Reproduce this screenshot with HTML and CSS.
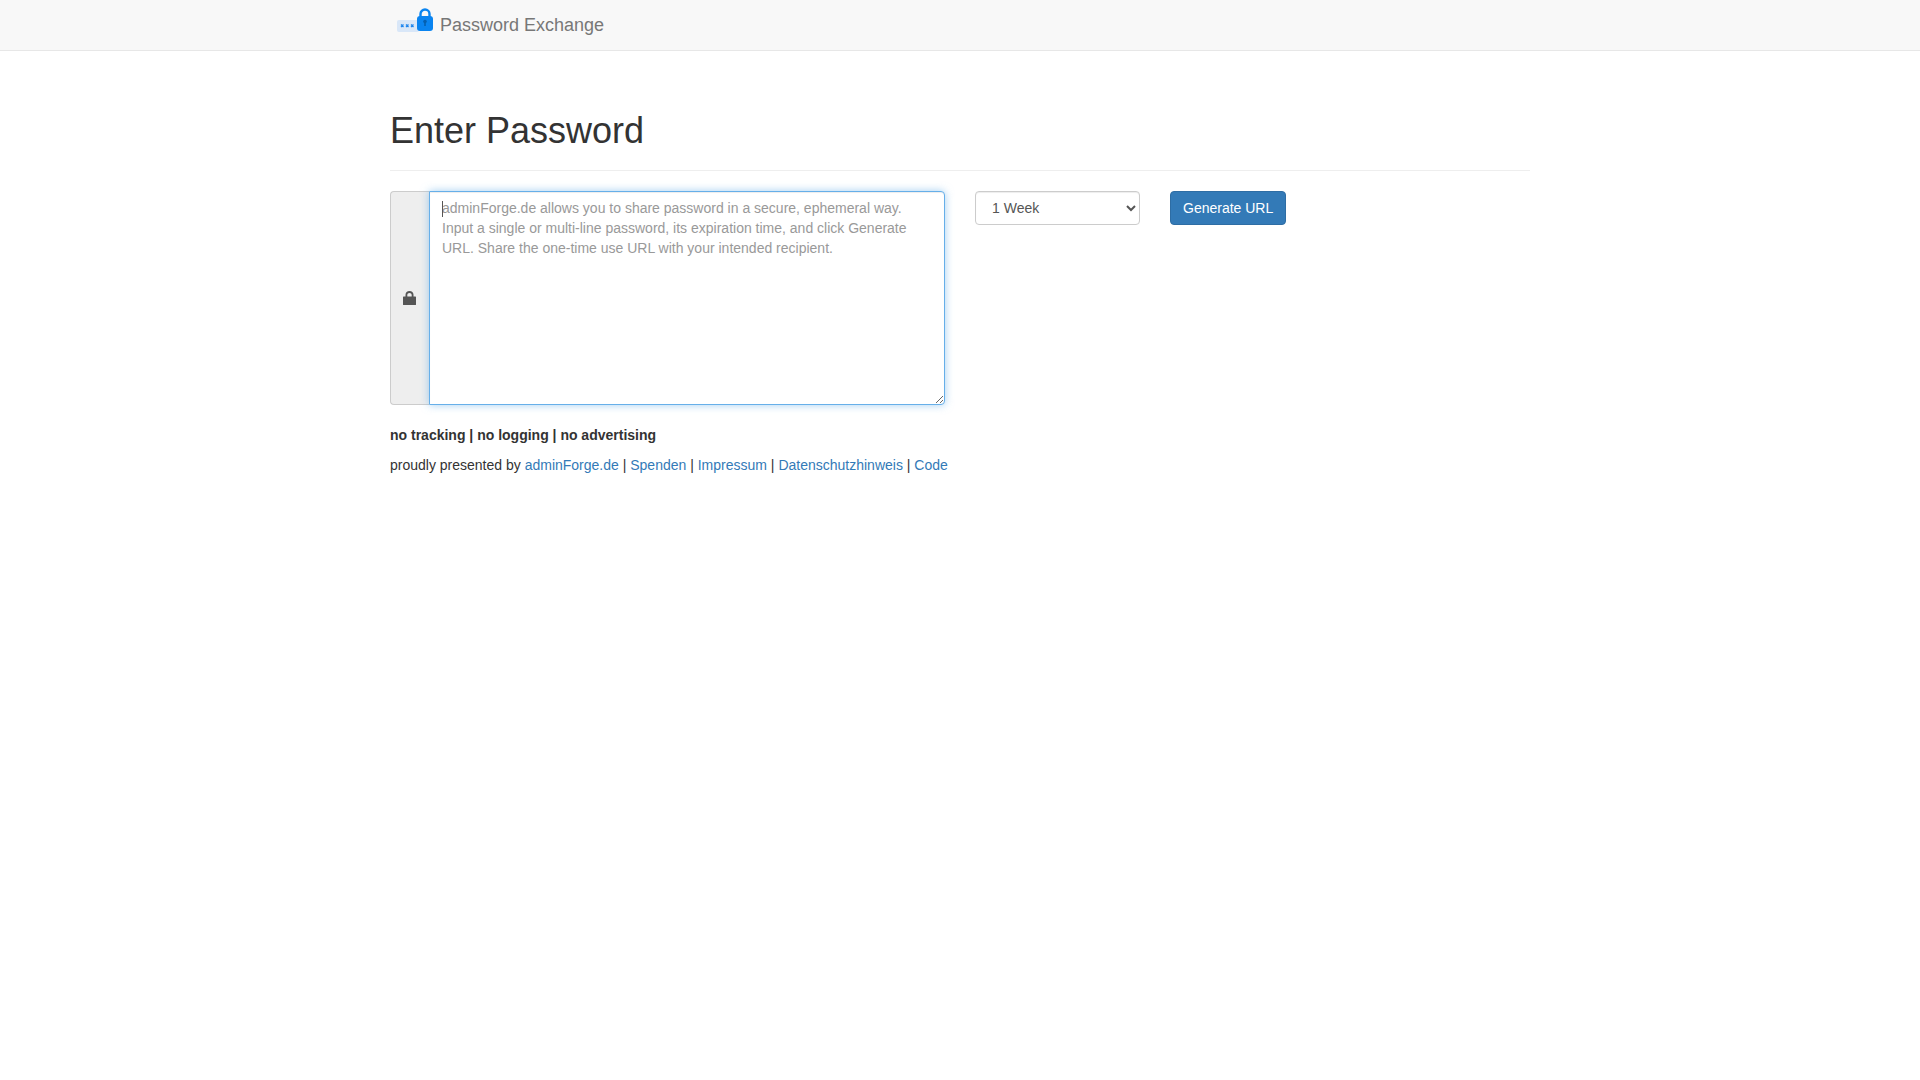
FILE: index.html
```html
<!DOCTYPE html>
<html lang="en">
<head>
<meta charset="utf-8">
<title>Password Exchange</title>
<link rel="stylesheet" href="styles.css">
</head>
<body>
<nav class="navbar">
  <div class="container">
    <a class="brand" href="#">
      <svg class="logo" width="36" height="24" viewBox="0 0 36 24" aria-hidden="true">
        <rect x="0" y="12" width="22" height="12" rx="2" fill="#d9e7f8"/>
        <path d="M4 16.500l2.500 2.500M6.500 16.500L4 19M9 16.500l2.500 2.500M11.500 16.500L9 19M14 16.500l2.500 2.500M16.500 16.500L14 19" fill="none" stroke="#1f86ee" stroke-width="1.300"/>
        <path d="M23.500 9V6a4.500 4.500 0 0 1 9 0v3" fill="none" stroke="#0a84f0" stroke-width="2.400"/>
        <rect x="20" y="8" width="16" height="15" rx="3" fill="#0a84f0"/>
        <circle cx="28" cy="13.500" r="1.800" fill="#0560b0"/>
        <rect x="27.200" y="14" width="1.600" height="4" fill="#0560b0"/>
      </svg>
      <span>Password Exchange</span>
    </a>
  </div>
</nav>
<main class="container">
  <div class="page-header"><h1>Enter Password</h1></div>
  <form class="pw-form">
    <div class="input-group">
      <span class="addon">
        <svg class="lock" width="13" height="14" viewBox="0 0 13 14" aria-hidden="true"><path d="M2.500 5.500V3.800C2.500 1.400 4.200 0 6.500 0s4 1.400 4 3.800v1.700H8.700V3.900c0-1.200-.9-2-2.200-2s-2.200.8-2.200 2v1.600zM.6 5.500h11.800a.6.600 0 0 1 .6.600v7.300a.6.600 0 0 1-.6.600H.6a.6.600 0 0 1-.6-.6V6.100a.6.600 0 0 1 .6-.6z" fill="#555"/></svg>
      </span>
      <textarea class="pw-input" autofocus placeholder="adminForge.de allows you to share password in a secure, ephemeral way. Input a single or multi-line password, its expiration time, and click Generate URL. Share the one-time use URL with your intended recipient."></textarea>
      <span class="caret"></span>
    </div>
    <select class="ttl">
      <option>1 Week</option>
      <option>1 Day</option>
      <option>1 Hour</option>
    </select>
    <button class="btn" type="button">Generate URL</button>
  </form>
  <p class="tagline">no tracking | no logging | no advertising</p>
  <p class="links">proudly presented by <a href="#">adminForge.de</a> | <a href="#">Spenden</a> | <a href="#">Impressum</a> | <a href="#">Datenschutzhinweis</a> | <a href="#">Code</a></p>
</main>
</body>
</html>
```
FILE: styles.css
```css
* { box-sizing: border-box; }
html, body { margin: 0; padding: 0; }
body {
  font-family: "Liberation Sans", Arial, sans-serif;
  font-size: 14px;
  line-height: 20px;
  color: #333;
  background: #fff;
}
.container { width: 1170px; margin: 0 auto; padding: 0 15px; }
.navbar {
  height: 51px;
  background: #f8f8f8;
  border-bottom: 1px solid #e7e7e7;
}
.brand {
  display: flex;
  align-items: center;
  height: 50px;
  padding-left: 7px;
  gap: 7px;
  font-size: 18px;
  color: #777;
  text-decoration: none;
}
.logo { display: block; align-self: flex-start; margin-top: 8px; flex: none; }
.page-header {
  margin: 60px 0 20px;
  padding-bottom: 9px;
  border-bottom: 1px solid #eee;
}
h1 {
  margin: 0 0 10px;
  font-size: 36px;
  font-weight: 500;
  line-height: 39.6px;
  color: #333;
}
.pw-form { display: flex; align-items: flex-start; gap: 30px; margin-bottom: 20px; }
.input-group { position: relative; display: flex; width: 555px; height: 214px; }
.addon {
  flex: 0 0 39px;
  display: flex;
  align-items: center;
  justify-content: center;
  padding-right: 1px;
  background: #eee;
  border: 1px solid #ccc;
  border-right: 0;
  border-radius: 4px 0 0 4px;
}
.lock { display: block; }
.pw-input {
  flex: 1;
  height: 214px;
  padding: 6px 12px;
  margin: 0;
  font: 14px/20px "Liberation Sans", Arial, sans-serif;
  color: #555;
  border: 1px solid #66afe9;
  border-radius: 0 4px 4px 0;
  outline: 0;
  box-shadow: inset 0 1px 1px rgba(0,0,0,.075), 0 0 8px rgba(102,175,233,.6);
}
.pw-input::placeholder { color: #999; opacity: 1; }
.caret {
  position: absolute;
  left: 52px;
  top: 10px;
  width: 1px;
  height: 16px;
  background: #555;
}
.ttl {
  width: 165px;
  height: 34px;
  padding: 6px 12px;
  font: 14px/20px "Liberation Sans", Arial, sans-serif;
  color: #555;
  background: #fff;
  border: 1px solid #ccc;
  border-radius: 4px;
  box-shadow: inset 0 1px 1px rgba(0,0,0,.075);
}
.btn {
  height: 34px;
  padding: 6px 12px;
  font: 14px/20px "Liberation Sans", Arial, sans-serif;
  color: #fff;
  background: #337ab7;
  border: 1px solid #2e6da4;
  border-radius: 4px;
}
.tagline { margin: 0 0 10px; font-weight: 700; }
.links { margin: 0 0 10px; }
a { color: #337ab7; text-decoration: none; }
```
